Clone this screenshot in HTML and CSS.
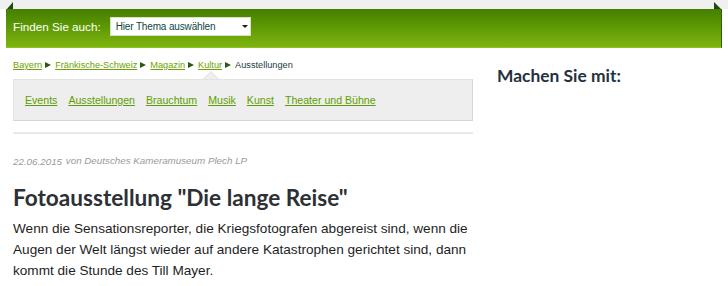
FILE: index.html
```html
<!DOCTYPE html>
<html lang="de">
<head>
<meta charset="UTF-8">
<title>Fotoausstellung "Die lange Reise"</title>
<link rel="stylesheet" href="styles.css">
</head>
<body>
<div class="topstrip"></div>
<div class="finder">
  <span class="fold fold-left"></span>
  <span class="finder-label">Finden Sie auch:</span>
  <div class="select"><span>Hier Thema auswählen</span><span class="caret"></span></div>
  <span class="fold fold-right"></span>
</div>
<div class="page">
  <div class="main">
    <div class="crumbs">
      <a href="#">Bayern</a><span class="sep"></span><a href="#">Fränkische-Schweiz</a><span class="sep"></span><a href="#">Magazin</a><span class="sep"></span><a href="#">Kultur</a><span class="sep"></span><span class="current">Ausstellungen</span>
    </div>
    <div class="subnav">
      <a href="#">Events</a><a href="#">Ausstellungen</a><a href="#">Brauchtum</a><a href="#">Musik</a><a href="#">Kunst</a><a href="#">Theater und Bühne</a>
    </div>
    <div class="rule"></div>
    <div class="meta"><span class="date">22.06.2015</span> <span class="author">von Deutsches Kameramuseum Plech LP</span></div>
    <h1>Fotoausstellung "Die lange Reise"</h1>
    <p>Wenn die Sensationsreporter, die Kriegsfotografen abgereist sind, wenn die Augen der Welt längst wieder auf andere Katastrophen gerichtet sind, dann kommt die Stunde des Till Mayer.</p>
  </div>
  <div class="side">
    <h2>Machen Sie mit:</h2>
  </div>
</div>
</body>
</html>
```
FILE: styles.css
```css
*{margin:0;padding:0;box-sizing:border-box;}
body{font-family:"Liberation Sans",Arial,sans-serif;background:#fff;color:#222;}
a{color:#62a000;text-decoration:underline;}
.topstrip{height:9px;background:#f0f0f0;}
.finder{position:relative;margin:0 6px;height:39px;background:linear-gradient(#447f00,#5a9503 40%,#7eb50f);border-bottom:1px solid #8dc226;border-right:1px solid #2f5e08;display:flex;align-items:flex-start;padding:8px 0 0 7px;}
.finder-label{color:#fff;font-size:11.7px;line-height:19px;margin-right:9px;}
.select{width:141px;height:19px;background:#fff;border:1px solid #d6e2c4;display:flex;align-items:center;justify-content:space-between;padding:0 2px 0 5px;font-size:10px;letter-spacing:-0.15px;color:#0e4646;white-space:nowrap;}
.caret{width:0;height:0;border-left:3px solid transparent;border-right:3px solid transparent;border-top:3px solid #1a1a1a;}
.fold{position:absolute;top:-7px;width:0;height:0;border-bottom:7px solid #1f4812;}
.fold-left{left:1px;border-left:6px solid transparent;}
.fold-right{right:0;border-right:7px solid transparent;}
.page{display:flex;padding:0 13px;}
.main{width:460px;}
.crumbs{font-size:9.2px;line-height:14px;margin-top:10px;display:flex;align-items:center;}
.crumbs a{color:#6aa300;}
.sep{width:0;height:0;border-left:6px solid #2b5a12;border-top:3px solid transparent;border-bottom:3px solid transparent;margin:0 4px 0 3px;}
.current{color:#1d3c3c;}
.subnav{position:relative;margin-top:7px;height:42px;background:#eee;border:1px solid #e2e2e2;border-right-color:#d6d6d6;border-bottom-color:#d6d6d6;display:flex;align-items:center;gap:11px;padding-left:11px;font-size:10.6px;}
.subnav::before{content:"";position:absolute;top:-9px;left:189px;border-left:8px solid transparent;border-right:8px solid transparent;border-bottom:8px solid #e0e0e0;}
.subnav::after{content:"";position:absolute;top:-8px;left:190px;border-left:7px solid transparent;border-right:7px solid transparent;border-bottom:7px solid #eee;}
.subnav a{color:#5e9e00;}
.rule{margin-top:11px;height:2px;background:#e9e9e9;}
.meta{margin-top:20px;font-style:italic;color:#9a9a9a;font-size:9.8px;line-height:14px;}
.author{vertical-align:1px;margin-left:1px;}
h1{margin-top:15px;font-family:Lato,sans-serif;font-weight:bold;font-size:22.6px;line-height:28px;color:#2d3136;}
p{margin-top:6px;font-size:13.6px;line-height:21px;color:#1e1e1e;}
.side{margin-left:24px;padding-top:17px;}
h2{font-family:Lato,sans-serif;font-weight:bold;font-size:17.4px;line-height:22px;color:#26303f;}
```
